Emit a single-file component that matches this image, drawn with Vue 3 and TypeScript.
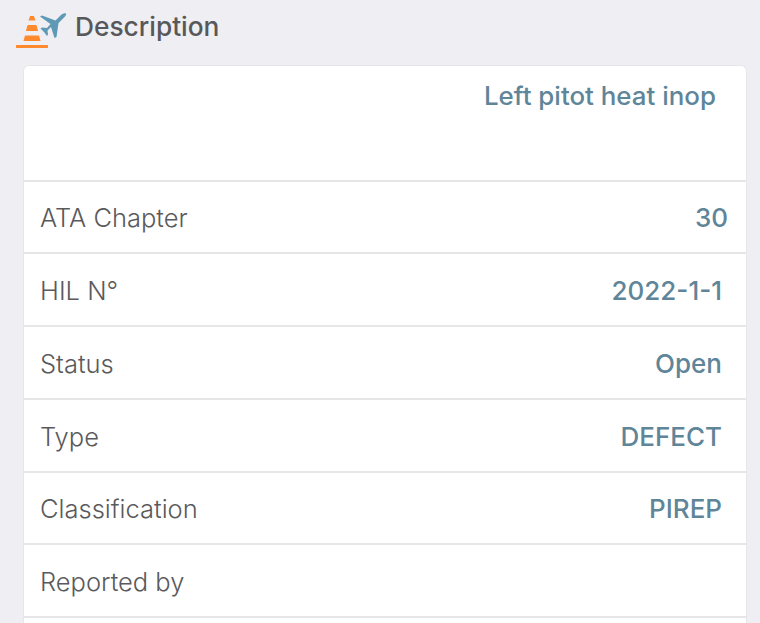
<script setup lang="ts">
interface Row {
  label: string
  value: string
  wide: boolean
}
const rows: Row[] = [
  { label: 'ATA Chapter', value: '30', wide: true },
  { label: 'HIL N°', value: '2022-1-1', wide: false },
  { label: 'Status', value: 'Open', wide: false },
  { label: 'Type', value: 'DEFECT', wide: false },
  { label: 'Classification', value: 'PIREP', wide: false },
  { label: 'Reported by', value: '', wide: false },
  { label: '', value: '', wide: false }
]
</script>

<template>
  <main class="page">
    <header class="head">
      <svg class="logo" width="68" height="46" viewBox="0 0 68 46" aria-hidden="true">
        <path d="M30 12h4l1.400 4.500h-6.800z" fill="#ff8a2e" />
        <path d="M27.600 21h8.800l1.700 6H25.900z" fill="#ff8a2e" />
        <path d="M25 31.500h14l1.500 5.500H23.500z" fill="#ff8a2e" />
        <rect x="16" y="41" width="32" height="3" rx="0.500" fill="#ff8a2e" />
        <path d="M66 9.500C64 9 62 10 60 12L55.500 16.500 42 11.500 40 12.500 50.500 20 47 24 42 23.500 40.500 24.500 44 28 47 32 48 30.500 47.500 26.500 51 23 54.500 34 56.500 33 58.500 19 63.500 14C65.500 12 66.500 11 66 9.500Z" fill="#5e9ab5" />
      </svg>
      <h1 class="title">Description</h1>
    </header>
    <section class="card">
      <div class="desc">Left pitot heat inop</div>
      <div v-for="(row, i) in rows" :key="i" class="row">
        <span class="label">{{ row.label }}</span>
        <span class="value" :class="{ wide: row.wide }">{{ row.value }}</span>
      </div>
    </section>
  </main>
</template>

<style>
html, body { margin: 0; background: #eeeef3; }
body { overflow: hidden; }
</style>

<style scoped>
.page {
  width: 760px;
  height: 623px;
  overflow: hidden;
  background: #eeeef3;
  font-family: Inter, "Liberation Sans", sans-serif;
}
.head {
  display: flex;
  align-items: center;
  height: 54px;
}
.logo { flex: none; margin-right: 7px; overflow: visible; }
.title {
  margin: -1px 0 0;
  font-size: 26.300px;
  font-weight: 500;
  color: #58585a;
}
.card {
  margin: 11px 13px 0 23px;
  background: #fff;
  border: 1px solid #e6e6e8;
  border-bottom: 0;
  border-radius: 6px 6px 0 0;
}
.desc {
  height: 115.500px;
  box-sizing: border-box;
  padding: 14px 30px 0 0;
  text-align: right;
  font-size: 25.900px;
  font-weight: 500;
  line-height: 32px;
  color: #5f8599;
  border-bottom: 2px solid #e6e6e8;
}
.row {
  display: flex;
  justify-content: space-between;
  align-items: center;
  height: 72.750px;
  box-sizing: border-box;
  padding: 2px 24px 0 16px;
  border-bottom: 2px solid #e6e6e8;
}
.label {
  font-size: 25.500px;
  font-weight: 300;
  color: #5a5a5c;
}
.value {
  font-size: 26px;
  font-weight: 500;
  color: #5f8599;
}
.value.wide { margin-right: -6px; }
</style>
